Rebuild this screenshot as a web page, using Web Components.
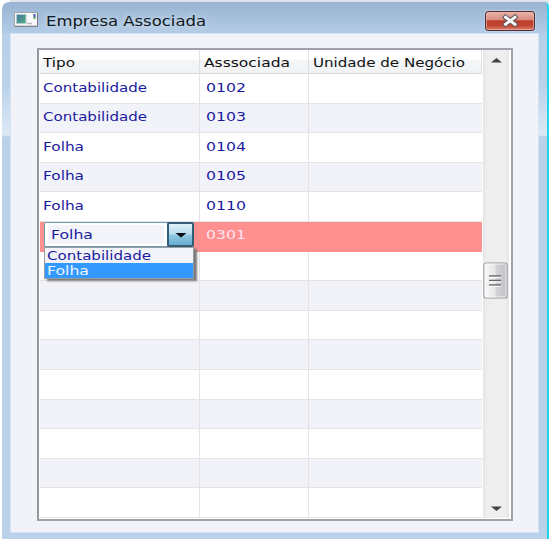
<!DOCTYPE html>
<html lang="pt"><head><meta charset="utf-8"><title>Empresa Associada</title>
<style>html,body{margin:0;background:#fff;overflow:hidden}body{font-family:"DejaVu Sans",sans-serif}</style></head>
<body><app-window></app-window>
<script>
const define=(name,html,ready)=>customElements.define(name,class extends HTMLElement{
  connectedCallback(){
    if(this.shadowRoot)return;
    const t=document.createElement('template');t.innerHTML=html;
    this.attachShadow({mode:'open'}).append(t.content.cloneNode(true));
    if(ready)ready.call(this,this.shadowRoot);
  }
});
// Text stretched horizontally to a given width
define('fit-text',`<style>:host{display:block;white-space:nowrap;font-size:13px;line-height:16px;height:16px}span{display:inline-block;transform-origin:0 50%}</style><span><slot></slot></span>`,
function(r){const s=r.querySelector('span');s.style.transform=`scaleX(${this.getAttribute('w')/s.getBoundingClientRect().width})`;});

define('form-icon',`<style>:host{display:block;width:24px;height:15px}svg{display:block}</style>
<svg width="24" height="15"><defs><linearGradient id="g" x2="1" y2="1"><stop stop-color="#3f77a0"/><stop offset="1" stop-color="#55b07c"/></linearGradient></defs>
<rect x=".5" y=".5" width="23" height="14" fill="#f8f8fa" stroke="#a3a5a8"/><path d="M1 14.2H23.5V1" fill="none" stroke="#77797c"/><rect x="2.5" y="2.5" width="9.5" height="9" fill="url(#g)" stroke="#b3ccd1"/><path d="M13 11.5h5" stroke="#b9babd" stroke-width="1.5"/><path d="M20.5 2v3" stroke="#3858bd" stroke-width="2"/><path d="M20.5 5v2" stroke="#4ea35b" stroke-width="2"/></svg>`);

define('close-button',`<style>:host{display:block;box-sizing:border-box;width:50px;height:20px;border:1px solid #542a32;border-radius:3px;background:linear-gradient(#e9b1a8 0,#d98c80 45%,#bd3e2d 48%,#c04431 75%,#d9806a);box-shadow:inset 0 0 0 1px #eab9b0aa,0 0 0 1px #c9dbed99}svg{display:block}</style>
<svg width="48" height="18"><path d="M19.5 5.2L29 12.3M29 5.2L19.5 12.3" stroke="#65595f" stroke-width="5" stroke-linecap="square"/><path d="M19.5 5.2L29 12.3M29 5.2L19.5 12.3" stroke="#fff" stroke-width="2.8" stroke-linecap="square"/></svg>`);

define('title-bar',`<style>:host{display:flex;box-sizing:border-box;height:32px;padding:9px 12px 0 12px;align-items:flex-start}fit-text{margin:2px 0 0 8px;color:#101820;flex:1;font-size:13.5px;line-height:16px;text-shadow:0 0 6px #e7f0fa}close-button{flex:none}form-icon{margin-top:1px}</style>
<form-icon></form-icon><fit-text w="160">Empresa Associada</fit-text><close-button></close-button>`);

define('scroll-bar',`<style>:host{display:flex;flex-direction:column;justify-content:space-between;box-sizing:border-box;background:linear-gradient(90deg,#e3e3e3,#eee 12%,#efefef 85%,#e6e6e6);height:100%}svg{display:block}</style>
<svg width="26" height="24"><path d="M8 12.5L13.5 8L19 12.5Z" fill="#444"/></svg>
<svg width="26" height="37" style="margin-top:-13px"><defs><linearGradient id="t"><stop stop-color="#fafafa"/><stop offset=".48" stop-color="#e6e6e8"/><stop offset=".55" stop-color="#d2d2d5"/><stop offset="1" stop-color="#c2c2c6"/></linearGradient></defs><rect x="1" y="1" width="23" height="35" rx="2" fill="url(#t)" stroke="#96969a" stroke-width="1.2"/><rect x="2" y="2" width="21" height="33" rx="1" fill="none" stroke="#fff" stroke-opacity=".7"/><path d="M6 14h12M6 18.5h12M6 23h12" stroke="#66676b" stroke-width="1.4"/><path d="M6 15.3h12M6 19.8h12M6 24.3h12" stroke="#fff"/></svg>
<svg width="26" height="18"><path d="M8 6.5L13.5 11L19 6.5Z" fill="#444"/></svg>`);

define('combo-box',`<style>:host{display:block;position:absolute;left:4px;top:.5px;width:150px;z-index:2;color:#1a1a9f}
.field{display:flex;box-sizing:border-box;height:25px;border:1px solid #6e9eb5;border-radius:2px;background:#fff;padding:0}
.value{flex:1;margin:2px 4px 2px 3px;padding:2px 0 0 2.5px;background:#f3f3fa}
.arrow{box-sizing:border-box;width:27px;height:25px;margin:-1px;border:2px solid #345d78;border-radius:2px;background:linear-gradient(#dff0f8,#b9dced 48%,#8fc7e1 52%,#66aed0)}svg{display:block}
.list{box-sizing:border-box;width:150px;height:32px;border:1px solid #9a9ca2;background:#f3f3fa;box-shadow:3px 2px 2px #777}
.item{height:15px;padding-left:2px}.item fit-text{line-height:16px;height:15px}.on{background:#3399ff;color:#edf5ff}</style>
<div class="field"><div class="value"><fit-text w="42">Folha</fit-text></div><div class="arrow"><svg width="23" height="21"><path d="M6.5 9L12 13.5L17.5 9Z" fill="#05080c"/></svg></div></div>
<div class="list"><div class="item"><fit-text w="104">Contabilidade</fit-text></div><div class="item on"><fit-text w="42">Folha</fit-text></div></div>`);

define('data-row',`<style>:host{display:grid;position:relative;grid-template-columns:160px 109px 1fr;height:29.6px;box-sizing:border-box;color:#1a1a9f;border-bottom:1px solid #e4e4e8;background:#fff}:host([alt]){background:#f2f3f9}:host([selected]){background:#ff9090;color:#ffe4f0;border-color:#ff9090}
div{box-sizing:border-box;border-right:1.5px solid #e3e3e7;padding:5.5px 0 0 3px}div+div{padding-left:5.7px}div:last-of-type{border:0}:host([selected]) div{border-color:#ff9090}</style>
<div id="a"></div><div id="b"></div><div></div>`,function(r){
 const k=this.getAttribute('kind'),c=this.getAttribute('code');
 if(this.hasAttribute('selected'))r.append(document.createElement('combo-box'));
 else if(k)r.getElementById('a').innerHTML=`<fit-text w="${k=='Folha'?41:104}">${k}</fit-text>`;
 if(c)r.getElementById('b').innerHTML=`<fit-text w="40">${c}</fit-text>`;
});

define('data-table',`<style>:host{display:grid;grid-template-columns:442px 1px 26px;box-sizing:border-box;width:476px;height:473px;border:2px solid #a0a2aa;border-left-color:#94969e;box-shadow:inset 1px 1px #fff,inset -1px -1px #fff;padding:0 1px 1px;background:#fff}
.head{display:grid;grid-template-columns:160px 109px 1fr;box-sizing:border-box;height:24px;background:linear-gradient(#fff 40%,#f5f6f8 45%,#f1f2f4);border-bottom:1.5px solid #d9dade;color:#111}
.head div{box-sizing:border-box;border-right:1px solid #e0e1e5;padding:5px 0 0 3px}.head div+div{padding-left:3.5px}</style>
<div><div class="head"><div><fit-text w="32">Tipo</fit-text></div><div><fit-text w="86">Asssociada</fit-text></div><div><fit-text w="152">Unidade de Negócio</fit-text></div></div><div id="rows"></div></div><i></i><scroll-bar></scroll-bar>`,function(r){
 const d=[['Contabilidade','0102'],['Contabilidade','0103'],['Folha','0104'],['Folha','0105'],['Folha','0110'],['Folha','0301']];
 for(let i=0;i<15;i++){const e=document.createElement('data-row');if(i%2)e.setAttribute('alt','');if(i==5){e.setAttribute('selected','');}
 if(d[i]){e.setAttribute('kind',d[i][0]);e.setAttribute('code',d[i][1]);}r.getElementById('rows').append(e);}
});

define('app-window',`<style>:host{display:block;box-sizing:border-box;width:549px;height:539px;padding:2px 0 0 2px;background:linear-gradient(90deg,#fff 0 10px,#dfe3e8 10px)}
.frame{box-sizing:border-box;height:537px;width:547px;border-right:2px solid #22d5ee;border-radius:7px 5px 0 0;background:linear-gradient(#98b4d2 0,#b4cce6 32px,#bad1ea 75px,#bad1e9);overflow:hidden}
.sides{background:linear-gradient(#b8d0e9 0,#bad1ea 50px,#dce9f5 101px,#bad1e9 103px);padding:0 9px 0 9px;height:505px;box-sizing:border-box}
.body{box-sizing:border-box;height:498px;background:#f2f3f9;padding:14px 0 0 26px;box-shadow:0 0 0 1px #d2e3f5}</style>
<div class="frame"><title-bar></title-bar><div class="sides"><div class="body"><data-table></data-table></div></div></div>`);
</script></body></html>
